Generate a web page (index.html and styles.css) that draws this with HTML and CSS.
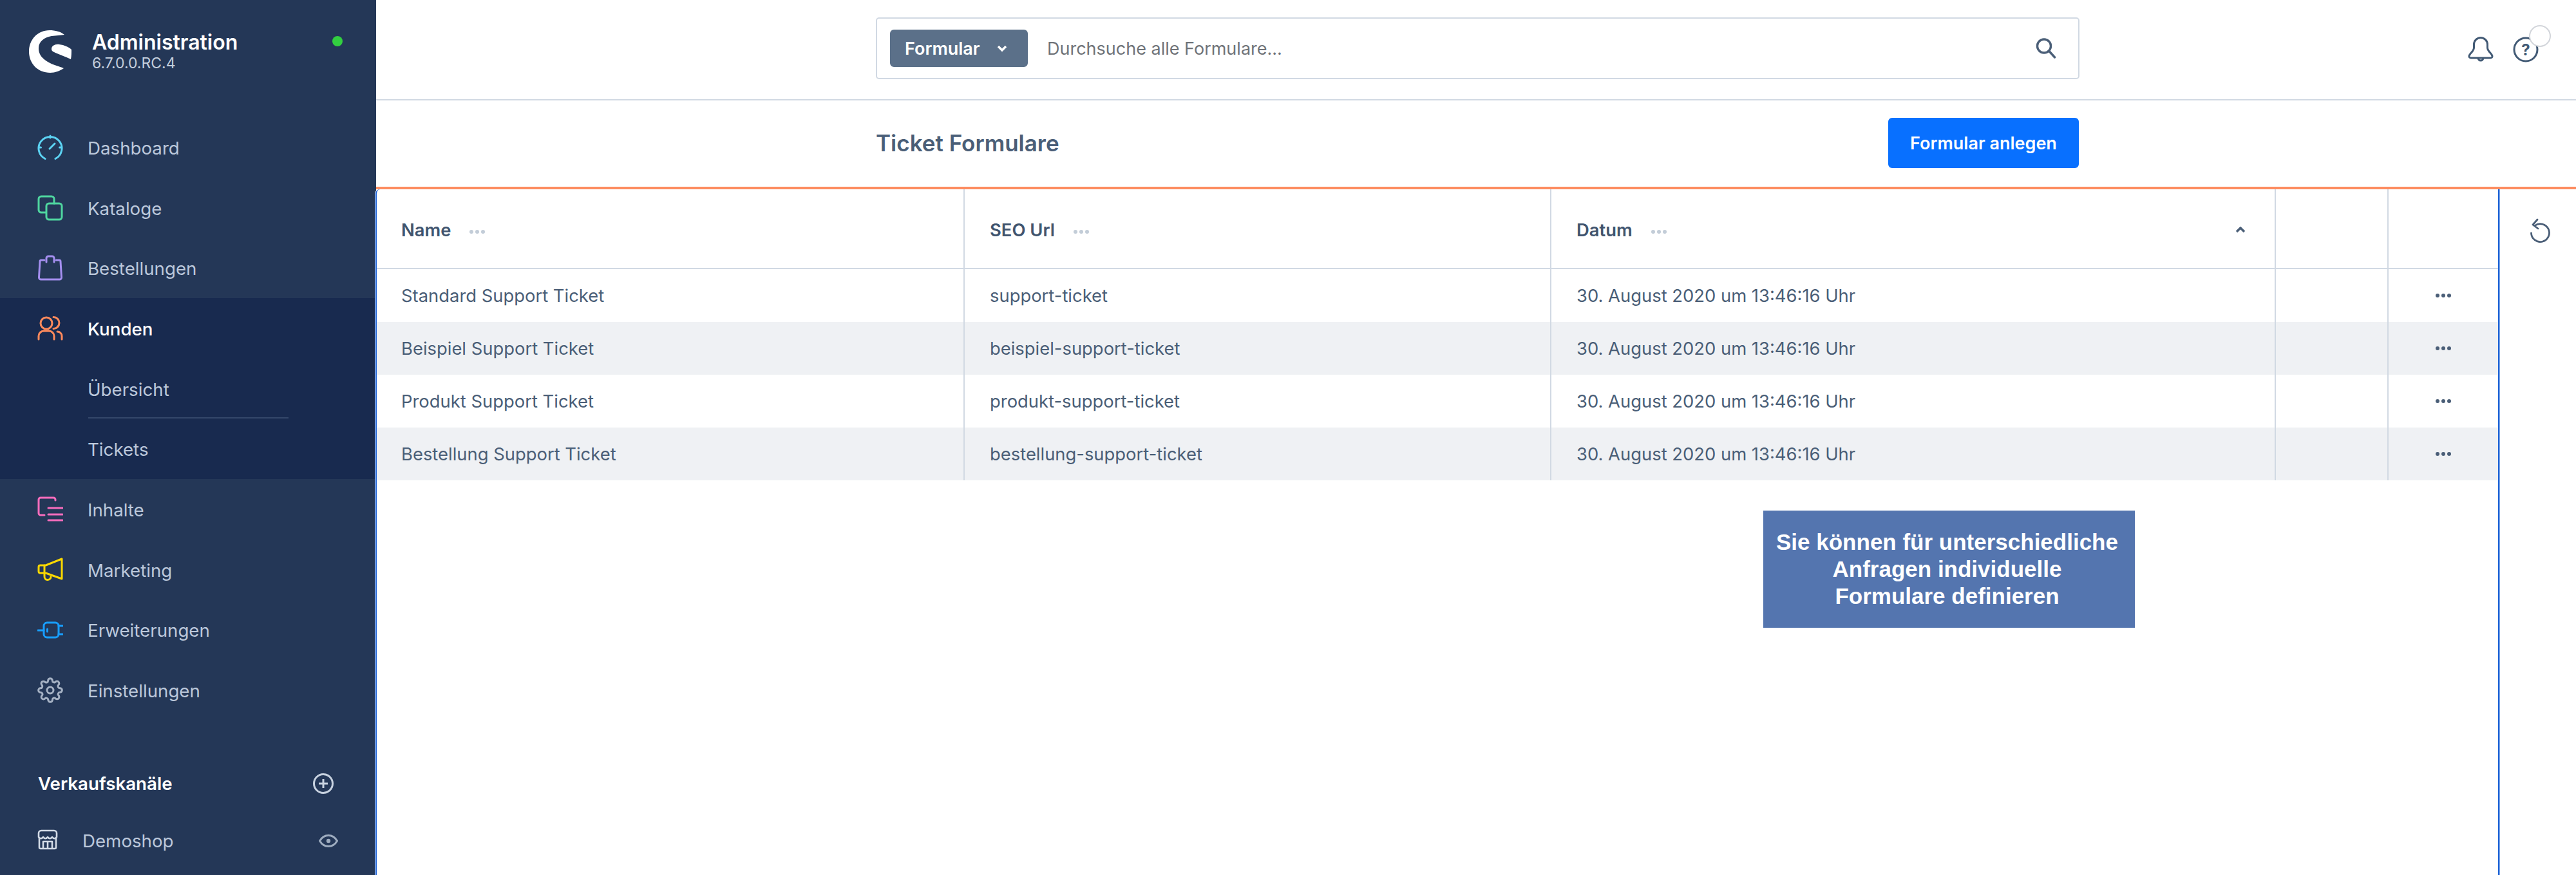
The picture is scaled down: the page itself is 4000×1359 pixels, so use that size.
FILE: index.html
```html
<!DOCTYPE html>
<html lang="de">
<head>
<title>Ticket Formulare - Administration</title>
<meta charset="UTF-8">
<link rel="stylesheet" href="styles.css">
</head>
<body>
<div class="app">

<aside class="sidebar">
	<div class="brand">
		<svg class="logo" viewBox="0 0 66 66"><path d="M55 7C49 2 41 0 32 0 13 0 0 15 0 33 0 52 14 66 33 66 41 66 48 63 54 59 44 55 34 53 26 47 19 42 15 36 15 28 15 17 24 11 35 9 42 8 49 8 55 7Z"/><path d="M35 29C35 24 41 21 47 22 55 23 62 26 66 30 66 35 66 40 65 45 57 41 48 38 41 35 37 33 35 32 35 29Z"/></svg>
		<div class="brandText">
			<div class="brandTitle">Administration</div>
			<div class="brandVersion">6.7.0.0.RC.4</div>
		</div>
		<span class="statusDot"></span>
	</div>

	<nav class="nav">
		<a class="navRow">
			<svg class="icon iconDashboard" viewBox="0 0 40 40"><path d="M12 37.5a18 18 0 1 1 16 0"/><path d="M20 2v3M2.5 20h3M34.500 20h3M19 22l8-8"/></svg>
			Dashboard
		</a>
		<a class="navRow">
			<svg class="icon iconCatalog" viewBox="0 0 40 40"><path d="M13 27H6a4 4 0 0 1-4-4V6a4 4 0 0 1 4-4H22a4 4 0 0 1 4 4v7"/><rect x="14" y="13" width="24" height="25" rx="4"/></svg>
			Kataloge
		</a>
		<a class="navRow">
			<svg class="icon iconOrders" viewBox="0 0 40 40"><path d="M11 8H6a2 2 0 0 0-2 2L2.500 35a3 3 0 0 0 3 3H34.500a3 3 0 0 0 3-3L36 10a2 2 0 0 0-2-2H29"/><path d="M14 11V5a3 3 0 0 1 3-3H23a3 3 0 0 1 3 3v6"/></svg>
			Bestellungen
		</a>
		<div class="navGroup">
			<a class="navRow navActive">
				<svg class="icon iconCustomers" viewBox="0 0 40 40"><circle cx="14" cy="12" r="9"/><path d="M25 2.500a9 9 0 0 1 0 18M2 37V32a8 8 0 0 1 8-8H18a8 8 0 0 1 8 8v5M31 25a7 7 0 0 1 7 7v5"/></svg>
				Kunden
			</a>
			<a class="navRow navSub navSubLine">Übersicht</a>
			<a class="navRow navSub">Tickets</a>
		</div>
		<a class="navRow">
			<svg class="icon iconContent" viewBox="0 0 40 40"><path d="M28 6V5a3 3 0 0 0-3-3H5a3 3 0 0 0-3 3V26a3 3 0 0 0 3 3h6"/><path d="M17 18H39M17 28H39M17 37H39"/></svg>
			Inhalte
		</a>
		<a class="navRow">
			<svg class="icon iconMarketing" viewBox="0 0 40 40"><path d="M38 3 13 13H4.500a2.500 2.500 0 0 0-2.500 2.500v7A2.500 2.500 0 0 0 4.500 25H13l25 9Z"/><path d="M11 13V25M11 26v4a5 5 0 0 0 10 1"/></svg>
			Marketing
		</a>
		<a class="navRow">
			<svg class="icon iconExtensions" viewBox="0 0 40 40"><rect x="10" y="9" width="23" height="23" rx="5"/><path d="M1 21h9M33 14h6M33 27h6M15.500 19v4"/></svg>
			Erweiterungen
		</a>
		<a class="navRow">
			<svg class="icon iconSettings" viewBox="0 0 24 24"><circle cx="12" cy="12" r="3"/><path d="M19.400 15a1.650 1.650 0 0 0 .33 1.820l.06.06a2 2 0 0 1 0 2.830 2 2 0 0 1-2.830 0l-.06-.06a1.650 1.650 0 0 0-1.820-.33 1.650 1.650 0 0 0-1 1.510V21a2 2 0 0 1-2 2 2 2 0 0 1-2-2v-.09A1.650 1.650 0 0 0 9 19.400a1.650 1.650 0 0 0-1.820.33l-.06.06a2 2 0 0 1-2.830 0 2 2 0 0 1 0-2.830l.06-.06a1.650 1.650 0 0 0 .33-1.820 1.650 1.650 0 0 0-1.510-1H3a2 2 0 0 1-2-2 2 2 0 0 1 2-2h.09A1.650 1.650 0 0 0 4.600 9a1.650 1.650 0 0 0-.33-1.820l-.06-.06a2 2 0 0 1 0-2.830 2 2 0 0 1 2.830 0l.06.06a1.650 1.650 0 0 0 1.820.33H9a1.650 1.650 0 0 0 1-1.510V3a2 2 0 0 1 2-2 2 2 0 0 1 2 2v.09a1.650 1.650 0 0 0 1 1.510 1.650 1.650 0 0 0 1.820-.33l.06-.06a2 2 0 0 1 2.830 0 2 2 0 0 1 0 2.830l-.06.06a1.650 1.650 0 0 0-.33 1.820V9a1.650 1.650 0 0 0 1.510 1H21a2 2 0 0 1 2 2 2 2 0 0 1-2 2h-.09a1.650 1.650 0 0 0-1.510 1z"/></svg>
			Einstellungen
		</a>
	</nav>

	<div class="salesHead">
		<span>Verkaufskanäle</span>
		<svg class="plusIcon" viewBox="0 0 32 32"><circle cx="16" cy="16" r="14.500"/><path d="M16 9v14M9 16h14"/></svg>
	</div>
	<div class="salesRow">
		<svg class="storeIcon" viewBox="0 0 32 32"><path d="M2 6a4 4 0 0 1 4-4H26a4 4 0 0 1 4 4v6c-2 3-5 3-7 0-2 3-5 3-7 0-2 3-5 3-7 0-2 3-5 3-7 0Z"/><path d="M3 13V28a2 2 0 0 0 2 2H27a2 2 0 0 0 2-2V13M9 30V19H23V30M16 19V30"/></svg>
		<span>Demoshop</span>
		<svg class="eyeIcon" viewBox="0 0 30 20"><path d="M1.500 10C5 4 10 1.500 15 1.500S25 4 28.500 10C25 16 20 18.500 15 18.500S5 16 1.500 10Z"/><circle class="eyeDot" cx="15" cy="10" r="3.200"/></svg>
	</div>
</aside>

<main class="main">
	<header class="topbar">
		<div class="search">
			<span class="searchType">Formular
				<svg class="searchChevron" viewBox="0 0 20 14"><path d="M4 4l6 6 6-6"/></svg>
			</span>
			<span class="searchHint">Durchsuche alle Formulare...</span>
			<svg class="searchIcon" viewBox="0 0 32 32"><circle cx="13" cy="12.500" r="10.500"/><path d="M20.500 20l9 10"/></svg>
		</div>
		<div class="topActions">
			<svg class="topIcon" viewBox="0 0 40 40"><path d="M9.500 12a10.500 10.500 0 0 1 21 0v5c0 6 7 9 7.500 13 .2 2-1 3-3 3H5c-2 0-3.200-1-3-3 .5-4 7.500-7 7.500-13ZM16 33a4 4 0 0 0 8 0"/></svg>
			<svg class="topIcon" viewBox="0 0 40 40"><circle cx="20" cy="20" r="18"/><text class="helpMark" x="20" y="28.500" text-anchor="middle">?</text></svg>
			<span class="helpBadge"></span>
		</div>
	</header>

	<div class="smartBar">
		<h1 class="pageTitle">Ticket Formulare</h1>
		<button class="createBtn">Formular anlegen</button>
	</div>

	<div class="content">
		<div class="list">
			<table class="grid">
				<colgroup><col class="colName"><col class="colSeo"><col class="colDate"><col class="colBlank"><col class="colMenu"></colgroup>
				<thead>
					<tr>
						<th>Name <span class="dots dotsHead"><i></i><i></i><i></i></span></th>
						<th>SEO Url <span class="dots dotsHead"><i></i><i></i><i></i></span></th>
						<th>
							<div class="headSort">
								<span>Datum <span class="dots dotsHead"><i></i><i></i><i></i></span></span>
								<svg class="caret" viewBox="0 0 16 10"><path d="M2 8l6-6 6 6"/></svg>
							</div>
						</th>
						<th></th>
						<th class="cellMenu"></th>
					</tr>
				</thead>
				<tbody>
					<tr>
						<td>Standard Support Ticket</td><td>support-ticket</td><td>30. August 2020 um 13:46:16 Uhr</td><td></td>
						<td class="cellMenu"><span class="dots"><i></i><i></i><i></i></span></td>
					</tr>
					<tr>
						<td>Beispiel Support Ticket</td><td>beispiel-support-ticket</td><td>30. August 2020 um 13:46:16 Uhr</td><td></td>
						<td class="cellMenu"><span class="dots"><i></i><i></i><i></i></span></td>
					</tr>
					<tr>
						<td>Produkt Support Ticket</td><td>produkt-support-ticket</td><td>30. August 2020 um 13:46:16 Uhr</td><td></td>
						<td class="cellMenu"><span class="dots"><i></i><i></i><i></i></span></td>
					</tr>
					<tr>
						<td>Bestellung Support Ticket</td><td>bestellung-support-ticket</td><td>30. August 2020 um 13:46:16 Uhr</td><td></td>
						<td class="cellMenu"><span class="dots"><i></i><i></i><i></i></span></td>
					</tr>
				</tbody>
			</table>
		</div>
		<div class="sidePanel">
			<svg class="undoIcon" viewBox="0 0 32 38"><path d="M8 11.500a14 14 0 1 1-5.500 11.500M12 2 5 10l8 6"/></svg>
		</div>
		<div class="callout">Sie können für unterschiedliche<br>Anfragen individuelle<br>Formulare definieren</div>
	</div>
</main>

</div>
</body>
</html>
```

FILE: styles.css
```css
* {
	box-sizing: border-box;
}
body {
	margin: 0;
	background: #fff;
	font-family: Inter, "Liberation Sans", sans-serif;
	color: #4a5e77;
}
.app {
	display: flex;
	height: 1359px;
	overflow: hidden;
}

/* sidebar */
.sidebar {
	width: 584px;
	flex: none;
	background: #243757;
	color: #bcc8db;
	font-size: 27.700px;
}
.brand {
	display: flex;
	align-items: flex-start;
	height: 182px;
	padding: 47px 52px 0 45px;
	color: #fff;
}
.logo {
	width: 66px;
	height: 66px;
	fill: #fff;
}
.brandText {
	margin: 2px 0 0 32px;
}
.brandTitle {
	font-size: 32px;
	font-weight: 600;
	line-height: 34px;
}
.brandVersion {
	font-size: 23px;
	line-height: 30px;
	color: #c3cedd;
}
.statusDot {
	width: 16px;
	height: 16px;
	margin: 9px 0 0 auto;
	border-radius: 50%;
	background: #32cf40;
}
.navRow {
	display: flex;
	align-items: center;
	gap: 38px;
	height: 93.7px;
	padding: 2px 0 0 58px;
}
.navRow .icon {
	margin-top: -2px;
}
.navGroup {
	background: #182a4f;
}
.navActive {
	color: #fff;
	font-weight: 500;
}
.navSub {
	padding-left: 136px;
	font-weight: 400;
	position: relative;
}
.navSubLine::after {
	content: "";
	position: absolute;
	left: 137px;
	bottom: 0;
	width: 311px;
	height: 2px;
	background: #34476a;
}
.icon {
	width: 40px;
	height: 40px;
	flex: none;
	fill: none;
	stroke-width: 3;
	stroke-linecap: round;
	stroke-linejoin: round;
}
.iconDashboard { stroke: #5cd3f3; }
.iconCatalog { stroke: #4fd6a0; }
.iconOrders { stroke: #a58ff0; }
.iconCustomers { stroke: #ff8a5c; }
.iconContent { stroke: #f76dbd; }
.iconMarketing { stroke: #fad800; }
.iconExtensions { stroke: #189eff; }
.iconSettings { stroke: #a6b2c4; stroke-width: 1.800; }

.salesHead {
	display: flex;
	align-items: center;
	justify-content: space-between;
	height: 64px;
	margin-top: 65px;
	padding: 2px 66px 0 59px;
	color: #fff;
	font-weight: 600;
}
.plusIcon {
	width: 32px;
	height: 32px;
	fill: none;
	stroke: #c8d2e0;
	stroke-width: 3;
}
.salesRow {
	display: flex;
	align-items: center;
	height: 94px;
	margin-top: 10px;
	padding: 2px 59px 0 58px;
}
.storeIcon {
	width: 32px;
	height: 32px;
	margin-top: -3px;
	fill: none;
	stroke: #d3dbe6;
	stroke-width: 2.600;
	stroke-linejoin: round;
}
.salesRow span {
	margin-left: 38px;
}
.eyeIcon {
	width: 30px;
	height: 20px;
	margin-left: auto;
	fill: none;
	stroke: #9eacbf;
	stroke-width: 3;
}
.eyeDot {
	fill: #9eacbf;
	stroke: none;
}

/* top */
.main {
	flex: 1;
	min-width: 0;
	display: flex;
	flex-direction: column;
}
.topbar {
	display: flex;
	align-items: center;
	height: 156px;
	padding: 0 58px 4px 776px;
	border-bottom: 2px solid #d1d9e3;
}
.search {
	display: flex;
	align-items: center;
	width: 1869px;
	height: 96px;
	padding: 0 34px 0 20px;
	border: 2px solid #d1d9e3;
	border-radius: 5px;
}
.searchType {
	display: flex;
	align-items: center;
	justify-content: space-between;
	width: 214px;
	height: 58px;
	padding: 0 30px 0 23px;
	border-radius: 6px;
	background: #5b7089;
	color: #fff;
	font-size: 27px;
	font-weight: 600;
}
.searchChevron {
	width: 20px;
	height: 14px;
	fill: none;
	stroke: #fff;
	stroke-width: 3.400;
}
.searchHint {
	margin-left: 30px;
	font-size: 27px;
	color: #6f7378;
}
.searchIcon {
	width: 32px;
	height: 32px;
	margin-left: auto;
	fill: none;
	stroke: #4a5e77;
	stroke-width: 3.400;
	stroke-linecap: round;
}
.topActions {
	display: flex;
	gap: 30px;
	margin: 4px 0 0 auto;
	position: relative;
}
.topIcon {
	width: 40px;
	height: 40px;
	fill: none;
	stroke: #425a75;
	stroke-width: 3;
	stroke-linecap: round;
	stroke-linejoin: round;
}
.helpMark {
	fill: #425a75;
	stroke: none;
	font-size: 24px;
	font-weight: 700;
}
.helpBadge {
	position: absolute;
	top: -18px;
	right: -19px;
	width: 34px;
	height: 34px;
	border: 2px solid #d2d5da;
	border-radius: 50%;
	background: #fff;
}
.smartBar {
	display: flex;
	align-items: center;
	justify-content: space-between;
	height: 134px;
	padding: 0 772px 2px 776px;
}
.pageTitle {
	margin: 0;
	font-size: 35px;
	font-weight: 600;
	color: #4a5e77;
}
.createBtn {
	width: 296px;
	height: 78px;
	border: 0;
	border-radius: 6px;
	background: #0870ff;
	color: #fff;
	font-family: inherit;
	font-size: 27px;
	font-weight: 600;
}

/* content */
.content {
	flex: 1;
	display: flex;
	position: relative;
	border-top: 4px solid #fd8c60;
}
.list {
	width: 3298px;
	flex: none;
	margin-left: -1px;
	border-left: 2px solid #1c62d6;
	border-right: 2px solid #1c62d6;
	border-top-left-radius: 7px;
	background: #fff;
	box-shadow: -1px 0 0 #dfe9f8, 1px 0 0 #8fb3ea;
}
.grid {
	width: 100%;
	table-layout: fixed;
	border-collapse: separate;
	border-spacing: 0;
	font-size: 27.400px;
}
.colName { width: 913px; }
.colSeo { width: 911px; }
.colDate { width: 1125px; }
.colBlank { width: 175px; }
.colMenu { width: 170px; }
.grid th, .grid td {
	padding: 0 40px 0 39px;
	border-right: 2px solid #d1d9e3;
	text-align: left;
}
.grid th:first-child, .grid td:first-child {
	padding-left: 38px;
}
.grid th {
	height: 124px;
	padding-top: 4px;
	border-bottom: 2px solid #d1d9e3;
	font-weight: 600;
	color: #40546e;
}
.grid td {
	height: 82px;
}
.grid .cellMenu {
	border-right: 0;
	padding: 0;
}
.dots {
	display: inline-flex;
	gap: 3px;
	vertical-align: middle;
}
.cellMenu .dots {
	display: flex;
	justify-content: center;
}
.grid tbody tr:nth-child(even) {
	background: #eff1f4;
}
.dots i {
	width: 6px;
	height: 6px;
	border-radius: 50%;
	background: #4a5e77;
}
.dotsHead {
	margin-left: 22px;
}
.dotsHead i {
	background: #c3cdd8;
}
.headSort {
	display: flex;
	align-items: center;
	justify-content: space-between;
	padding-right: 5px;
}
.caret {
	width: 16px;
	height: 10px;
	fill: none;
	stroke: #4a5e77;
	stroke-width: 3.500;
}
.sidePanel {
	flex: 1;
	display: flex;
	justify-content: center;
	padding: 45px 0 0 6px;
}
.undoIcon {
	width: 32px;
	height: 38px;
	fill: none;
	stroke: #4a5e77;
	stroke-width: 2.800;
	stroke-linecap: round;
	stroke-linejoin: round;
}
.callout {
	position: absolute;
	left: 2154px;
	top: 499px;
	display: flex;
	align-items: center;
	justify-content: center;
	width: 577px;
	height: 182px;
	padding-right: 6px;
	background: #5475af;
	color: #fff;
	font-family: "Liberation Sans", Arial, sans-serif;
	font-size: 35px;
	font-weight: 700;
	line-height: 42px;
	text-align: center;
}
```
